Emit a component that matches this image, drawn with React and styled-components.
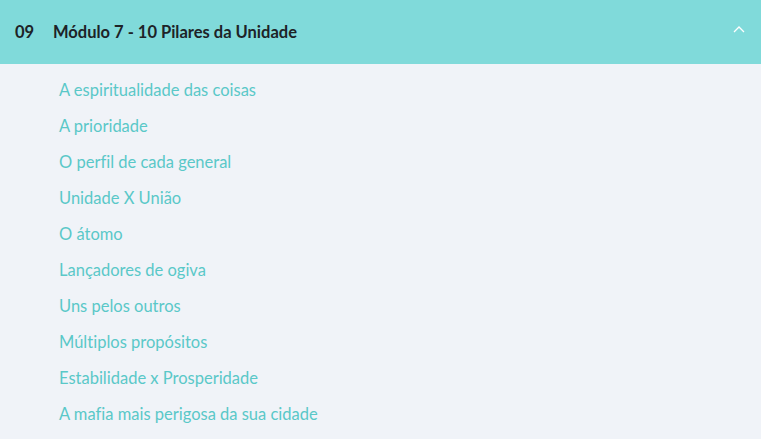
import React from 'react';
import styled, { createGlobalStyle } from 'styled-components';

const lessons = [
  'A espiritualidade das coisas',
  'A prioridade',
  'O perfil de cada general',
  'Unidade X União',
  'O átomo',
  'Lançadores de ogiva',
  'Uns pelos outros',
  'Múltiplos propósitos',
  'Estabilidade x Prosperidade',
  'A mafia mais perigosa da sua cidade'
];

function App() {
  return (
    <>
      <GlobalStyle />
      <Module>
        <Header>
          <Number>09</Number>
          <Title>Módulo 7 - 10 Pilares da Unidade</Title>
          <Chevron width="12" height="7" viewBox="0 0 12 7">
            <path d="M1 6 L6 1 L11 6" fill="none" stroke="#fff" strokeWidth="1.3" />
          </Chevron>
        </Header>
        <List>
          {lessons.map((l) => (
            <Lesson key={l}>{l}</Lesson>
          ))}
        </List>
      </Module>
    </>
  );
}

export default App;

const GlobalStyle = createGlobalStyle`
  body {
    margin: 0;
    background: #f0f3f8;
    font-family: Lato, "Open Sans", sans-serif;
    font-variant-ligatures: none;
  }
`;

const Module = styled.div`
  width: 761px;
  height: 439px;
  background: #f0f3f8;
  overflow: hidden;
`;

const Header = styled.div`
  height: 64px;
  background: #80dada;
  display: flex;
  align-items: center;
  padding: 0 16px 0 15px;
  box-sizing: border-box;
`;

const Number = styled.span`
  font-size: 16.5px;
  font-weight: 700;
  color: #1d2327;
  width: 38px;
`;

const Title = styled.span`
  font-size: 16.5px;
  font-weight: 700;
  color: #1d2327;
  flex: 1;
`;

const Chevron = styled.svg`
  margin-bottom: 6px;
`;

const List = styled.ul`
  list-style: none;
  margin: 0;
  padding: 8px 0 0 59px;
`;

const Lesson = styled.li`
  height: 36px;
  line-height: 36px;
  font-size: 16.5px;
  color: #5ac8c8;
`;
